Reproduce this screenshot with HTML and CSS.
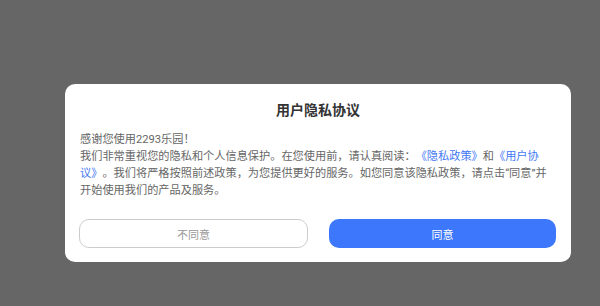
FILE: index.html
```html
<!DOCTYPE html>
<html lang="zh-CN">
<head>
<meta charset="utf-8">
<link rel="stylesheet" href="styles.css">
</head>
<body>
<div class="dialog">
  <h1 class="title">用户隐私协议</h1>
  <p class="content">感谢您使用2293乐园！<br>我们非常重视您的隐私和个人信息保护。在您使用前，请认真阅读：<a class="link">《隐私政策》</a>和<a class="link">《用户协议》</a>。我们将严格按照前述政策，为您提供更好的服务。如您同意该隐私政策，请点击“同意”并开始使用我们的产品及服务。</p>
  <div class="actions">
    <button class="btn btn-ghost">不同意</button>
    <button class="btn btn-primary">同意</button>
  </div>
</div>
</body>
</html>
```
FILE: styles.css
```css
html, body {
  margin: 0;
  padding: 0;
  height: 100%;
}
body {
  background: #666666;
  font-family: Roboto, "Noto Sans CJK SC", sans-serif;
  padding: 84px 0 0 65px;
  box-sizing: border-box;
}
.dialog {
  width: 506px;
  height: 178px;
  box-sizing: border-box;
  background: #ffffff;
  border-radius: 10px;
  padding: 16px 15px 14px 15px;
  display: flex;
  flex-direction: column;
}
.title {
  margin: 0;
  font-size: 14px;
  line-height: 20px;
  font-weight: 700;
  color: #333333;
  text-align: center;
}
.content {
  margin: 11px 0 0 0;
  padding-right: 8px;
  font-size: 11.2px;
  line-height: 17px;
  color: #666666;
  text-spacing-trim: space-all;
}
.link {
  color: #3f78f5;
  text-decoration: none;
}
.actions {
  margin-top: auto;
  display: flex;
  gap: 21px;
}
.btn {
  flex: 1;
  height: 29px;
  border-radius: 10px;
  font-family: Roboto, "Noto Sans CJK SC", sans-serif;
  font-size: 11px;
  padding: 0;
  margin: 0;
}
.btn:first-child {
  margin-left: -1px;
}
.btn-ghost {
  background: #ffffff;
  border: 1px solid #cccccc;
  color: #999999;
}
.btn-primary {
  background: #3d78fc;
  border: none;
  color: #ffffff;
}
```
